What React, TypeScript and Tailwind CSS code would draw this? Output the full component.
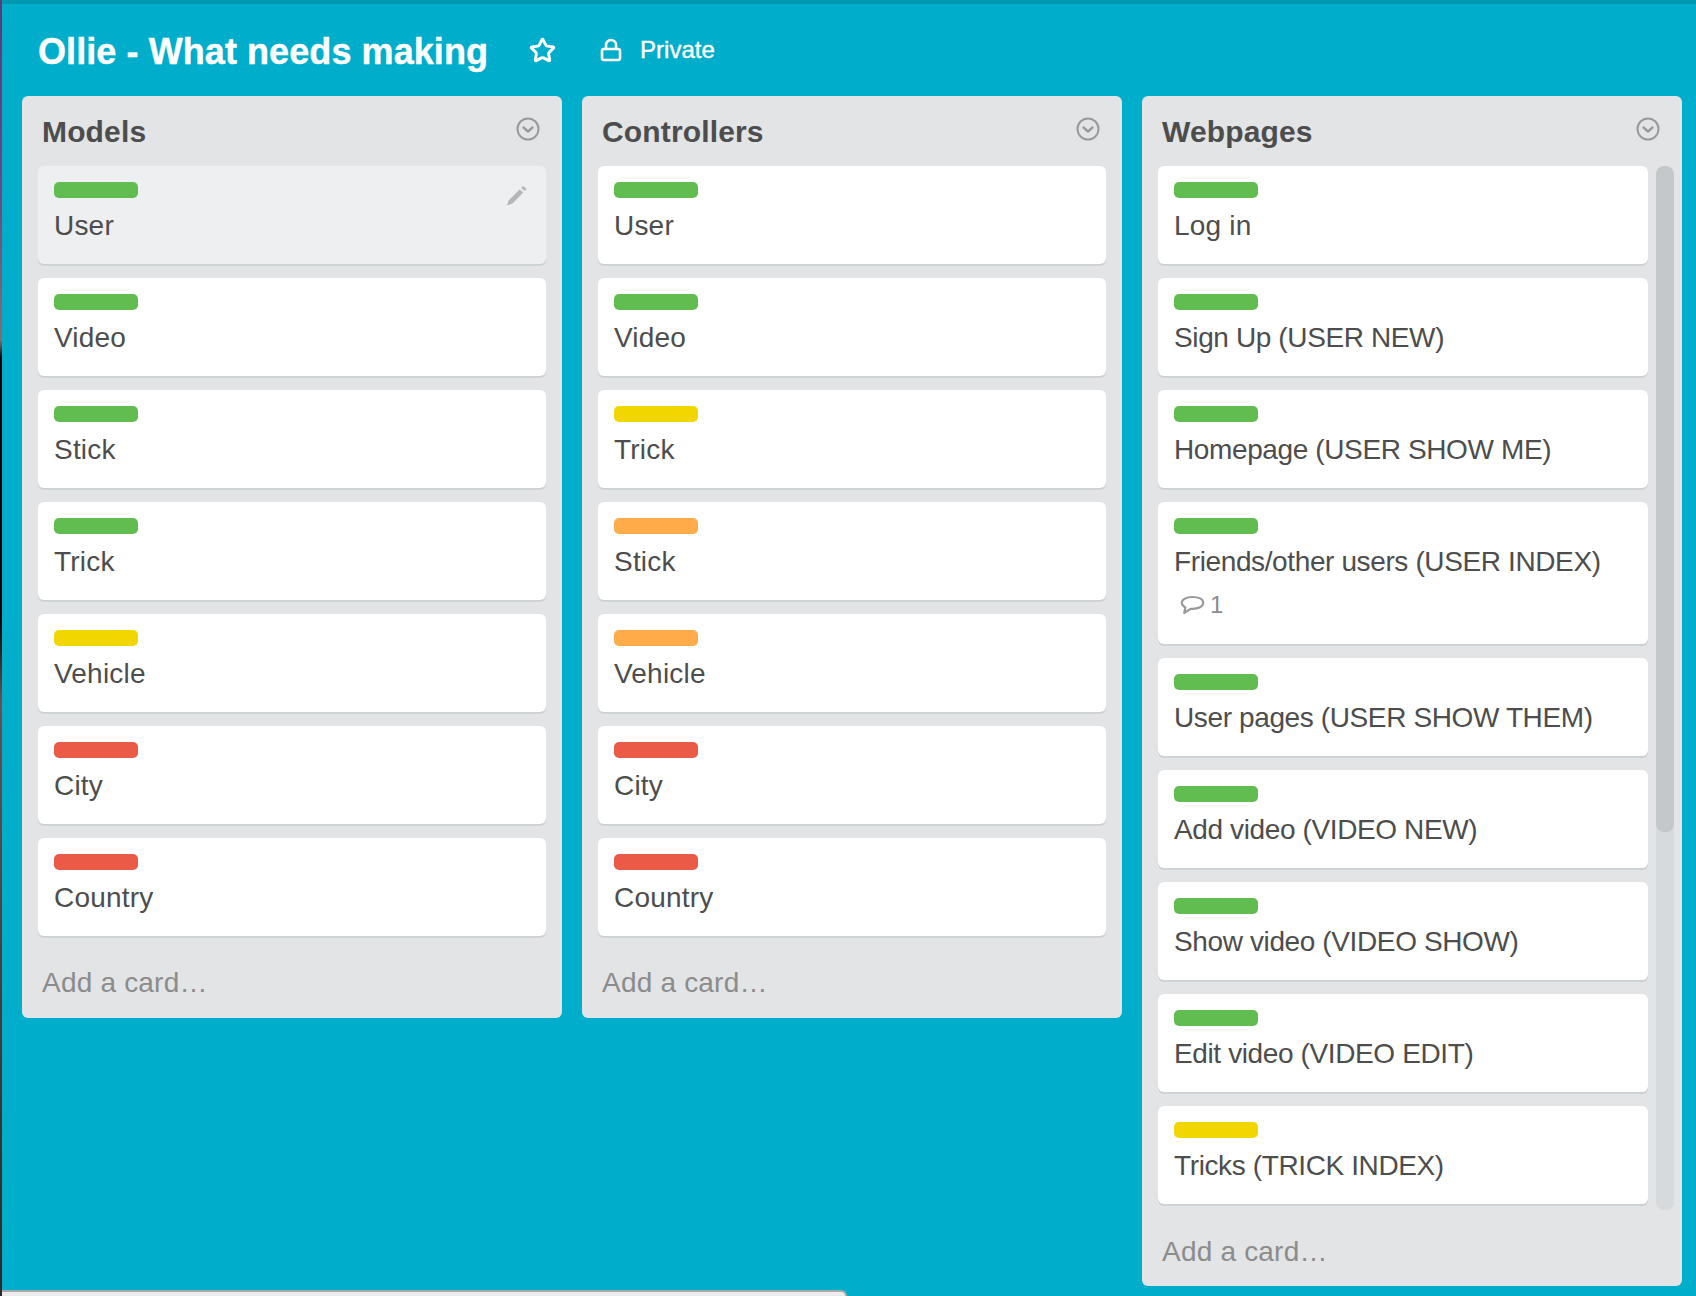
import { Star, Lock } from 'lucide-react';

type Label = 'green' | 'yellow' | 'orange' | 'red';

interface CardData {
  label: Label;
  title: string;
  comments?: number;
  hover?: boolean;
}

const labelClass: Record<Label, string> = {
  green: 'bg-[#61bd4f]',
  yellow: 'bg-[#f2d600]',
  orange: 'bg-[#ffab4a]',
  red: 'bg-[#eb5a46]',
};

const models: CardData[] = [
  { label: 'green', title: 'User', hover: true },
  { label: 'green', title: 'Video' },
  { label: 'green', title: 'Stick' },
  { label: 'green', title: 'Trick' },
  { label: 'yellow', title: 'Vehicle' },
  { label: 'red', title: 'City' },
  { label: 'red', title: 'Country' },
];

const controllers: CardData[] = [
  { label: 'green', title: 'User' },
  { label: 'green', title: 'Video' },
  { label: 'yellow', title: 'Trick' },
  { label: 'orange', title: 'Stick' },
  { label: 'orange', title: 'Vehicle' },
  { label: 'red', title: 'City' },
  { label: 'red', title: 'Country' },
];

const webpages: CardData[] = [
  { label: 'green', title: 'Log in' },
  { label: 'green', title: 'Sign Up (USER NEW)' },
  { label: 'green', title: 'Homepage (USER SHOW ME)' },
  { label: 'green', title: 'Friends/other users (USER INDEX)', comments: 1 },
  { label: 'green', title: 'User pages (USER SHOW THEM)' },
  { label: 'green', title: 'Add video (VIDEO NEW)' },
  { label: 'green', title: 'Show video (VIDEO SHOW)' },
  { label: 'green', title: 'Edit video (VIDEO EDIT)' },
  { label: 'yellow', title: 'Tricks (TRICK INDEX)' },
];

function ChevronCircle() {
  return (
    <svg className="w-6 h-6 text-[#999]" viewBox="0 0 24 24" fill="none" stroke="currentColor">
      <circle cx="12" cy="12" r="10.5" strokeWidth="2" />
      <path d="M7.5 10.5l4.5 4 4.5-4" strokeWidth="2.4" strokeLinecap="round" strokeLinejoin="round" />
    </svg>
  );
}

function Pencil() {
  return (
    <svg className="absolute top-[19px] right-[18px] w-[22px] h-[21px] text-[#b4b6b8]" viewBox="0 0 22 21" fill="currentColor">
      <path d="M13.6 4.6l3.6 3L6.6 18.4 1 20.6l1.6-5.2z" />
      <path d="M15.2 3l1.9-2 3.6 3-1.9 2z" />
    </svg>
  );
}

function CommentIcon() {
  return (
    <svg className="w-[25px] h-[21px] text-[#999]" viewBox="0 0 25 21" fill="none" stroke="currentColor" strokeWidth="2.2" strokeLinejoin="round">
      <path d="M12.5 2C6.4 2 1.8 4.4 1.8 7.8c0 2 1.6 3.6 3.6 4.6L4.2 18l6.6-4.2h1.7c6 0 10.7-2.3 10.7-6S18.5 2 12.5 2z" />
    </svg>
  );
}

function Card({ card }: { card: CardData }) {
  return (
    <div className={`relative shrink-0 rounded-[6px] px-4 pt-4 pb-[20px] shadow-[0_2px_0_#cdd2d4] ${card.hover ? 'bg-[#edeff0]' : 'bg-white'}`}>
      <div className={`w-[84px] h-4 rounded-[5px] ${labelClass[card.label]}`} />
      <div className={`mt-[10px] text-[28px] leading-9 text-[#4d4d4d] ${card.title.includes('(') ? 'tracking-[-0.38px]' : 'tracking-[0.2px]'}`}>
        {card.title}
      </div>
      {card.comments ? (
        <div className="flex items-center gap-[5px] pl-[6px] mt-[5px] mb-[-1px] h-[40px] text-[24px] text-[#8c8c8c]">
          <CommentIcon />
          <span>{card.comments}</span>
        </div>
      ) : null}
      {card.hover ? <Pencil /> : null}
    </div>
  );
}

function List({ title, cards, scroll }: { title: string; cards: CardData[]; scroll?: boolean }) {
  return (
    <div className="w-[540px] shrink-0 self-start rounded-[6px] bg-[#e2e4e6] flex flex-col">
      <div className="flex items-start justify-between h-[70px] pl-[20px] pr-[22px] pt-[21px]">
        <h2 className="mt-[-3px] text-[30px] leading-9 font-bold tracking-[0.15px] text-[#4d4d4d]">{title}</h2>
        <ChevronCircle />
      </div>
      <div className="flex">
        <div className={`flex flex-col gap-[14px] pl-4 ${scroll ? 'w-[506px]' : 'w-[524px]'}`}>
          {cards.map((card) => (
            <Card key={card.title} card={card} />
          ))}
        </div>
        {scroll ? (
          <div className="ml-[8px] w-[18px] rounded-[8px] bg-[#d6dadc] overflow-hidden mb-[-6px]">
            <div className="h-[666px] rounded-[8px] bg-[#c3c8cb]" />
          </div>
        ) : null}
      </div>
      <div className={`pl-[20px] text-[28px] leading-9 tracking-[0.2px] text-[#8c8c8c] ${scroll ? 'pt-[30px] pb-[16px]' : 'pt-[29px] pb-[17px]'}`}>
        Add a card…
      </div>
    </div>
  );
}

export default function App() {
  return (
    <div className="relative flex h-[1296px] w-[1696px] overflow-hidden bg-[#00aecc] font-['Liberation_Sans',Arial,sans-serif]">
      <div className="w-[2px] shrink-0 bg-[linear-gradient(to_bottom,#5a3a78_0,#6d4a80_200px,#8a6a70_340px,#0a0508_358px,#0a0508_620px,#6a5050_700px,#4a3a3a_1000px,#2a2a2a_1296px)]" />
      <div className="flex-1 min-w-0 flex flex-col">
        <div className="h-1 bg-[#0097b0]" />
        <div className="flex items-center h-[92px] pl-[36px] text-white">
          <h1 className="mt-[4px] text-[36px] leading-[44px] font-bold tracking-[0.08px] [-webkit-text-stroke:0.4px_white]">
            Ollie - What needs making
          </h1>
          <Star className="ml-[41px] w-[27px] h-[27px]" strokeWidth={2.6} />
          <Lock className="ml-[43px] w-[24px] h-[24px]" strokeWidth={2.6} />
          <span className="ml-[17px] text-[24px] leading-8 [-webkit-text-stroke:0.4px_white]">Private</span>
        </div>
        <div className="flex gap-[20px] pl-[20px]">
          <List title="Models" cards={models} />
          <List title="Controllers" cards={controllers} />
          <List title="Webpages" cards={webpages} scroll />
        </div>
      </div>
      <div className="absolute bottom-0 left-[2px] w-[845px] h-[6px] rounded-tr-[6px] border-t-2 border-r-2 border-[#a9a9a9] bg-[#ececec]" />
    </div>
  );
}
